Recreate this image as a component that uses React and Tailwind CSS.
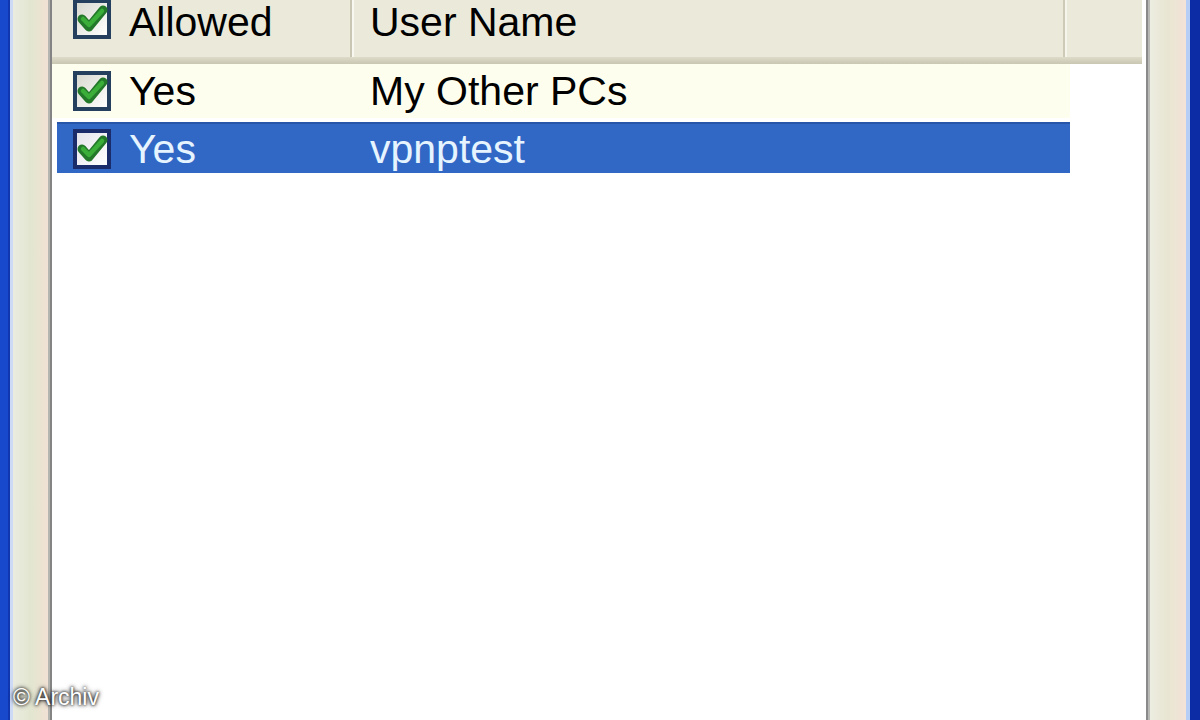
import React from "react";

const font = { fontFamily: '"Liberation Sans", Arial, sans-serif' };

function CheckBox({ selected }) {
    const id = selected ? "cbs" : "cb";
    return (
        <svg width="38" height="40" viewBox="0 0 38 40" className="shrink-0">
            <defs>
                <linearGradient id={id} x1="0" y1="0" x2="1" y2="1">
                    <stop offset="0" stopColor={selected ? "#e4e4ec" : "#d8d9d0"} />
                    <stop offset="1" stopColor="#ffffff" />
                </linearGradient>
            </defs>
            <rect x="0" y="0" width="38" height="40" fill={selected ? "#1a2c6a" : "#24405e"} />
            <rect x="4" y="4" width="30" height="32" fill={`url(#${id})`} />
            <path
                d="M9 20 L16 28 L30 11"
                fill="none"
                stroke="#23782a"
                strokeWidth="9"
                strokeLinecap="round"
                strokeLinejoin="round"
            />
            <path
                d="M10 20 L16 26 L29 12"
                fill="none"
                stroke="#3aae38"
                strokeWidth="4.5"
                strokeLinecap="round"
                strokeLinejoin="round"
            />
        </svg>
    );
}

export default function App() {
    return (
        <div
            className="relative flex h-[720px] w-[1200px] overflow-hidden bg-white"
            style={font}
        >
            {/* left window frame */}
            <div className="w-[8px] bg-[#1848cc]" />
            <div className="w-[2px] bg-[#1036b0]" />
            <div className="w-[3px] bg-[#cddaf6]" />
            <div className="w-[35px] bg-gradient-to-r from-[#eaece0] via-[#e2e6d0] to-[#f1e1d4]" />
            <div className="w-[2px] bg-[#b4b4b0]" />
            <div className="w-[2px] bg-[#848484]" />

            {/* list view */}
            <div className="flex w-[1094px] flex-col bg-white">
                {/* header */}
                <div className="flex h-[64px] w-[1090px] flex-col bg-[#ebeada]">
                    <div className="flex h-[57px] text-[41px] leading-[42px] text-black">
                        <div className="flex w-[298px] items-start pl-[21px]">
                            <div className="h-[40px] overflow-hidden">
                                <div className="-mt-[1px]">
                                    <CheckBox />
                                </div>
                            </div>
                            <span className="ml-[18px] block pt-[1px]">Allowed</span>
                        </div>
                        <div className="h-full w-[2px] bg-[#c9c6b3]" />
                        <div className="h-full w-[2px] bg-[#f8f7f0]" />
                        <div className="flex w-[709px] items-start pl-[16px]">
                            <span className="block pt-[1px]">User Name</span>
                        </div>
                        <div className="h-full w-[2px] bg-[#cdcab8]" />
                        <div className="h-full w-[2px] bg-[#f6f5ec]" />
                        <div className="flex-1" />
                    </div>
                    <div className="h-[7px] bg-gradient-to-b from-[#dedbc9] to-[#c9c6b2]" />
                </div>

                {/* rows */}
                <div className="flex h-[54px] w-[1018px] items-center bg-[#fefeef] text-[41px] leading-[46px] text-black">
                    <div className="flex w-[298px] items-center pl-[21px]">
                        <CheckBox />
                        <span className="ml-[18px]">Yes</span>
                    </div>
                    <span className="pl-[20px]">My Other PCs</span>
                </div>
                <div className="h-[4px] bg-white" />
                <div className="ml-[5px] flex h-[51px] w-[1013px] items-center border-t-2 border-[#2756a8] bg-[#3168c6] text-[41px] leading-[46px] text-[#e6f4ff]">
                    <div className="flex w-[293px] items-center pl-[16px]">
                        <CheckBox selected />
                        <span className="ml-[18px]">Yes</span>
                    </div>
                    <span className="pl-[20px]">vpnptest</span>
                </div>
                <div className="flex-1 bg-white" />
            </div>

            {/* right window frame */}
            <div className="w-[2px] bg-[#8a8a8a]" />
            <div className="w-[2px] bg-[#b8b8b4]" />
            <div className="w-[36px] bg-gradient-to-r from-[#ecece0] via-[#e8e6d2] to-[#f3e2d8]" />
            <div className="w-[4px] bg-[#b6cdf6]" />
            <div className="w-[10px] bg-[#0b2ca4]" />

            {/* watermark */}
            <div className="absolute left-[13px] top-[684px] text-[23px] leading-[26px] text-white [text-shadow:0_0_3px_#000,0_0_5px_#222]">
                © Archiv
            </div>
        </div>
    );
}
